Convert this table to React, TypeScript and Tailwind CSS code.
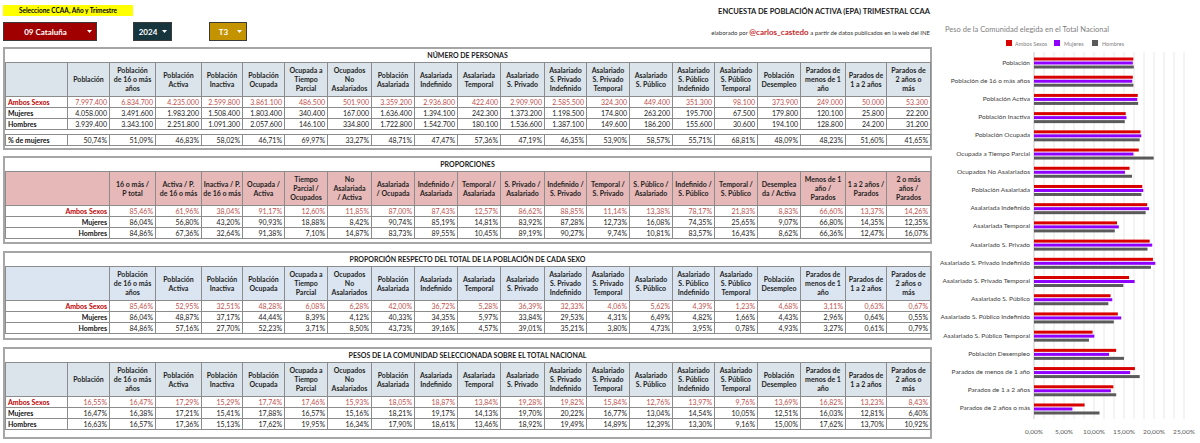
import React from "react"

const widths = [
  "w-[42px]", "w-[46px]", "w-[46px]", "w-[41px]", "w-[42px]", "w-[43px]", "w-[44px]", "w-[43px]", "w-[43px]", "w-[43px]",
  "w-[44px]", "w-[42px]", "w-[43px]", "w-[43px]", "w-[42px]", "w-[43px]", "w-[43px]", "w-[45px]", "w-[41px]", "w-[44px]",
]

const headers = [
  "Población",
  "Población\nde 16 o más\naños",
  "Población\nActiva",
  "Población\nInactiva",
  "Población\nOcupada",
  "Ocupada a\nTiempo\nParcial",
  "Ocupados\nNo\nAsalariados",
  "Población\nAsalariada",
  "Asalariada\nIndefinido",
  "Asalariada\nTemporal",
  "Asalariado\nS. Privado",
  "Asalariado\nS. Privado\nIndefinido",
  "Asalariado\nS. Privado\nTemporal",
  "Asalariado\nS. Público",
  "Asalariado\nS. Público\nIndefinido",
  "Asalariado\nS. Público\nTemporal",
  "Población\nDesempleo",
  "Parados de\nmenos de 1\naño",
  "Parados de\n1 a 2 años",
  "Parados de\n2 años o\nmás",
]

const propHeaders = [
  "16 o más /\nP total",
  "Activa / P.\nde 16 o más",
  "Inactiva / P.\nde 16 o más",
  "Ocupada /\nActiva",
  "Tiempo\nParcial /\nOcupados",
  "No\nAsalariada\n/ Activa",
  "Asalariada\n/ Ocupada",
  "Indefinido /\nAsalariada",
  "Temporal /\nAsalariada",
  "S. Privado /\nAsalariado",
  "Indefinido /\nS. Privado",
  "Temporal /\nS. Privado",
  "S. Público /\nAsalariado",
  "Indefinido /\nS. Público",
  "Temporal /\nS. Público",
  "Desemplea\nda / Activa",
  "Menos de 1\naño /\nParados",
  "1 a 2 años /\nParados",
  "2 o más\naños /\nParados",
]

const personas = [
  ["Ambos Sexos", "7.997.400 6.834.700 4.235.000 2.599.800 3.861.100 486.500 501.900 3.359.200 2.936.800 422.400 2.909.900 2.585.500 324.300 449.400 351.300 98.100 373.900 249.000 50.000 53.300"],
  ["Mujeres", "4.058.000 3.491.600 1.983.200 1.508.400 1.803.400 340.400 167.000 1.636.400 1.394.100 242.300 1.373.200 1.198.500 174.800 263.200 195.700 67.500 179.800 120.100 25.800 22.200"],
  ["Hombres", "3.939.400 3.343.100 2.251.800 1.091.300 2.057.600 146.100 334.800 1.722.800 1.542.700 180.100 1.536.600 1.387.100 149.600 186.200 155.600 30.600 194.100 128.800 24.200 31.200"],
]

const pctMujeres = "50,74% 51,09% 46,83% 58,02% 46,71% 69,97% 33,27% 48,71% 47,47% 57,36% 47,19% 46,35% 53,90% 58,57% 55,71% 68,81% 48,09% 48,23% 51,60% 41,65%"

const proporciones = [
  ["Ambos Sexos", "85,46% 61,96% 38,04% 91,17% 12,60% 11,85% 87,00% 87,43% 12,57% 86,62% 88,85% 11,14% 13,38% 78,17% 21,83% 8,83% 66,60% 13,37% 14,26%"],
  ["Mujeres", "86,04% 56,80% 43,20% 90,93% 18,88% 8,42% 90,74% 85,19% 14,81% 83,92% 87,28% 12,73% 16,08% 74,35% 25,65% 9,07% 66,80% 14,35% 12,35%"],
  ["Hombres", "84,86% 67,36% 32,64% 91,38% 7,10% 14,87% 83,73% 89,55% 10,45% 89,19% 90,27% 9,74% 10,81% 83,57% 16,43% 8,62% 66,36% 12,47% 16,07%"],
]

const respecto = [
  ["Ambos Sexos", "85,46% 52,95% 32,51% 48,28% 6,08% 6,28% 42,00% 36,72% 5,28% 36,39% 32,33% 4,06% 5,62% 4,39% 1,23% 4,68% 3,11% 0,63% 0,67%"],
  ["Mujeres", "86,04% 48,87% 37,17% 44,44% 8,39% 4,12% 40,33% 34,35% 5,97% 33,84% 29,53% 4,31% 6,49% 4,82% 1,66% 4,43% 2,96% 0,64% 0,55%"],
  ["Hombres", "84,86% 57,16% 27,70% 52,23% 3,71% 8,50% 43,73% 39,16% 4,57% 39,01% 35,21% 3,80% 4,73% 3,95% 0,78% 4,93% 3,27% 0,61% 0,79%"],
]

const pesos = [
  ["Ambos Sexos", "16,55% 16,47% 17,29% 15,29% 17,74% 17,46% 15,93% 18,05% 18,87% 13,84% 19,28% 19,82% 15,84% 12,76% 13,97% 9,76% 13,69% 16,82% 13,23% 8,43%"],
  ["Mujeres", "16,47% 16,38% 17,21% 15,41% 17,88% 16,57% 15,16% 18,21% 19,17% 14,13% 19,70% 20,22% 16,77% 13,04% 14,54% 10,05% 12,51% 16,03% 12,81% 6,40%"],
  ["Hombres", "16,63% 16,57% 17,36% 15,13% 17,62% 19,95% 16,34% 17,90% 18,61% 13,46% 18,92% 19,49% 14,89% 12,39% 13,30% 9,16% 15,00% 17,62% 13,70% 10,92%"],
]

const cell = "border border-[#8c8c8c] p-0 text-[7px] leading-none h-[11px]"

function Cols() {
  return (
    <colgroup>
      <col className="w-[62px]" />
      {widths.map((w, i) => (
        <col key={i} className={w} />
      ))}
    </colgroup>
  )
}

function Grid({ head, bg, span, right, rows }: { head: string[]; bg: string; span: number; right?: boolean; rows: string[][] }) {
  return (
    <table className="w-[925px] table-fixed border-collapse">
      <Cols />
      <tbody>
        <tr>
          <td colSpan={span} className={`${bg} border border-[#8c8c8c] h-[34px]`}></td>
          {head.map((h, i) => (
            <td
              key={i}
              className={`${bg} border border-[#8c8c8c] h-[34px] px-[1px] text-center align-middle font-bold text-[7px] leading-[9px] whitespace-pre-line text-[#1f1f1f]`}
            >
              {h}
            </td>
          ))}
        </tr>
        {rows.map(([label, vals], r) => (
          <tr key={label}>
            <td
              colSpan={span}
              className={`${cell} px-[2px] font-bold ${right ? "text-right" : "text-left"} ${r === 0 ? "text-[#c00000]" : "text-[#111]"}`}
            >
              {label}
            </td>
            {vals.split(" ").map((v, i) => (
              <td key={i} className={`${cell} text-right pr-[2px] ${r === 0 ? "text-[#c0504d]" : "text-[#1a1a1a]"}`}>
                {v}
              </td>
            ))}
          </tr>
        ))}
      </tbody>
    </table>
  )
}

function Box({ title, children, className }: { title: string; children: React.ReactNode; className?: string }) {
  return (
    <div className={`w-[929px] border-2 border-[#a6a6a6] ${className ?? ""}`}>
      <div className="h-[13px] flex items-center justify-center text-[7px] font-bold text-[#1a1a1a]">{title}</div>
      {children}
    </div>
  )
}

function Arrow() {
  return (
    <svg width="5" height="3" viewBox="0 0 5 3" className="mr-[4px]">
      <path d="M0 0h5L2.5 3z" fill="#fff" />
    </svg>
  )
}

function Drop({ label, cls }: { label: string; cls: string }) {
  return (
    <div className={`${cls} h-[19px] border border-[#3a3a3a] flex items-center text-white font-bold text-[8px]`}>
      <span className="flex-1 text-center">{label}</span>
      <Arrow />
    </div>
  )
}

function Chart() {
  const labels = headers.map((h) => h.replace(/\n/g, " "))
  const data = pesos.map(([, v]) => v.split(" ").map((s) => parseFloat(s.replace(",", "."))))
  const colors = ["#d90000", "#8f00ff", "#5a5a5a"]
  const offs = [-4.5, -0.5, 3.5]
  const x0 = 94
  return (
    <svg width="260" height="443" fontFamily="Lato, sans-serif">
      <text x="5" y="32" fontSize="7.5" fill="#7f7f7f">Peso de la Comunidad elegida en el Total Nacional</text>
      <rect x="66" y="40" width="6" height="6" fill={colors[0]} />
      <text x="75" y="45.5" fontSize="5.5" fill="#7f7f7f">Ambos Sexos</text>
      <rect x="114" y="40" width="6" height="6" fill={colors[1]} />
      <text x="124" y="45.5" fontSize="5.5" fill="#7f7f7f">Mujeres</text>
      <rect x="152" y="40" width="6" height="6" fill={colors[2]} />
      <text x="162" y="45.5" fontSize="5.5" fill="#7f7f7f">Hombres</text>
      {Array.from({ length: 16 }).map((_, k) => (
        <line key={k} x1={x0 + k * 10} x2={x0 + k * 10} y1="52" y2="419" stroke={k === 0 ? "#c8c8c8" : "#e8e8e8"} strokeWidth="1" />
      ))}
      {labels.map((l, i) => {
        const c = 62 + i * 18.21
        return (
          <g key={l}>
            <text x="90" y={c + 2.5} fontSize="6.5" fill="#404040" textAnchor="end">{l}</text>
            {data.map((d, s) => (
              <rect key={s} x={x0} y={c + offs[s]} width={d[i] * 6} height="3" fill={colors[s]} />
            ))}
          </g>
        )
      })}
      {["0,00%", "5,00%", "10,00%", "15,00%", "20,00%", "25,00%"].map((t, k) => (
        <text key={t} x={x0 + k * 30} y="434" fontSize="6.5" fill="#595959" textAnchor="middle">{t}</text>
      ))}
    </svg>
  )
}

export default function App() {
  return (
    <div className="w-[1200px] h-[443px] bg-white flex font-[family-name:Lato,sans-serif] text-[#1a1a1a] overflow-hidden">
      <div className="w-[932px] pl-[3px] shrink-0">
        <div className="h-[47px] w-[929px] flex justify-between">
          <div className="pt-[5px]">
            <div className="w-[130px] h-[11px] bg-[#ffff00] flex items-center justify-center text-[6.5px] font-bold text-black">
              Seleccione CCAA, Año y Trimestre
            </div>
            <div className="mt-[6px] flex">
              <Drop label="09 Cataluña" cls="w-[94px] bg-[#a00000]" />
              <Drop label="2024" cls="ml-[36px] w-[39px] bg-[#16353d]" />
              <Drop label="T3" cls="ml-[37px] w-[38px] bg-[#c49300]" />
            </div>
          </div>
          <div className="pt-[8px] pr-[2px] flex flex-col items-end">
            <div className="h-[8px] leading-[8px] text-[7.5px] font-bold text-[#1a1a1a]">
              ENCUESTA DE POBLACIÓN ACTIVA (EPA) TRIMESTRAL CCAA
            </div>
            <div className="mt-[11px] h-[10px] flex items-center text-[6px] text-[#333]">
              elaborado por&nbsp;<span className="text-[8px] font-bold text-[#c8282a]">@carlos_castedo</span>&nbsp;a partir de datos publicados en la web del INE
            </div>
          </div>
        </div>

        <Box title="NÚMERO DE PERSONAS" className="pb-[2px]">
          <Grid head={headers} bg="bg-[#dae4ea]" span={1} rows={personas} />
          <table className="mt-[4px] w-[925px] table-fixed border-collapse">
            <Cols />
            <tbody>
              <tr>
                <td className={`${cell} px-[2px] font-bold text-left text-[#111]`}>% de mujeres</td>
                {pctMujeres.split(" ").map((v, i) => (
                  <td key={i} className={`${cell} text-right pr-[2px]`}>{v}</td>
                ))}
              </tr>
            </tbody>
          </table>
        </Box>

        <Box title="PROPORCIONES" className="mt-[6px] pb-[3px]">
          <Grid head={propHeaders} bg="bg-[#e6b8b7]" span={2} right rows={proporciones} />
        </Box>

        <Box title="PROPORCIÓN RESPECTO DEL TOTAL DE LA POBLACIÓN DE CADA SEXO" className="mt-[7px] pb-[4px]">
          <Grid head={headers.slice(1)} bg="bg-[#dae5f1]" span={2} right rows={respecto} />
        </Box>

        <Box title="PESOS DE LA COMUNIDAD SELECCIONADA SOBRE EL TOTAL NACIONAL" className="mt-[7px] pb-[7px]">
          <Grid head={headers} bg="bg-[#dae4ea]" span={1} rows={pesos} />
        </Box>
      </div>
      <div className="ml-[8px]">
        <Chart />
      </div>
    </div>
  )
}
